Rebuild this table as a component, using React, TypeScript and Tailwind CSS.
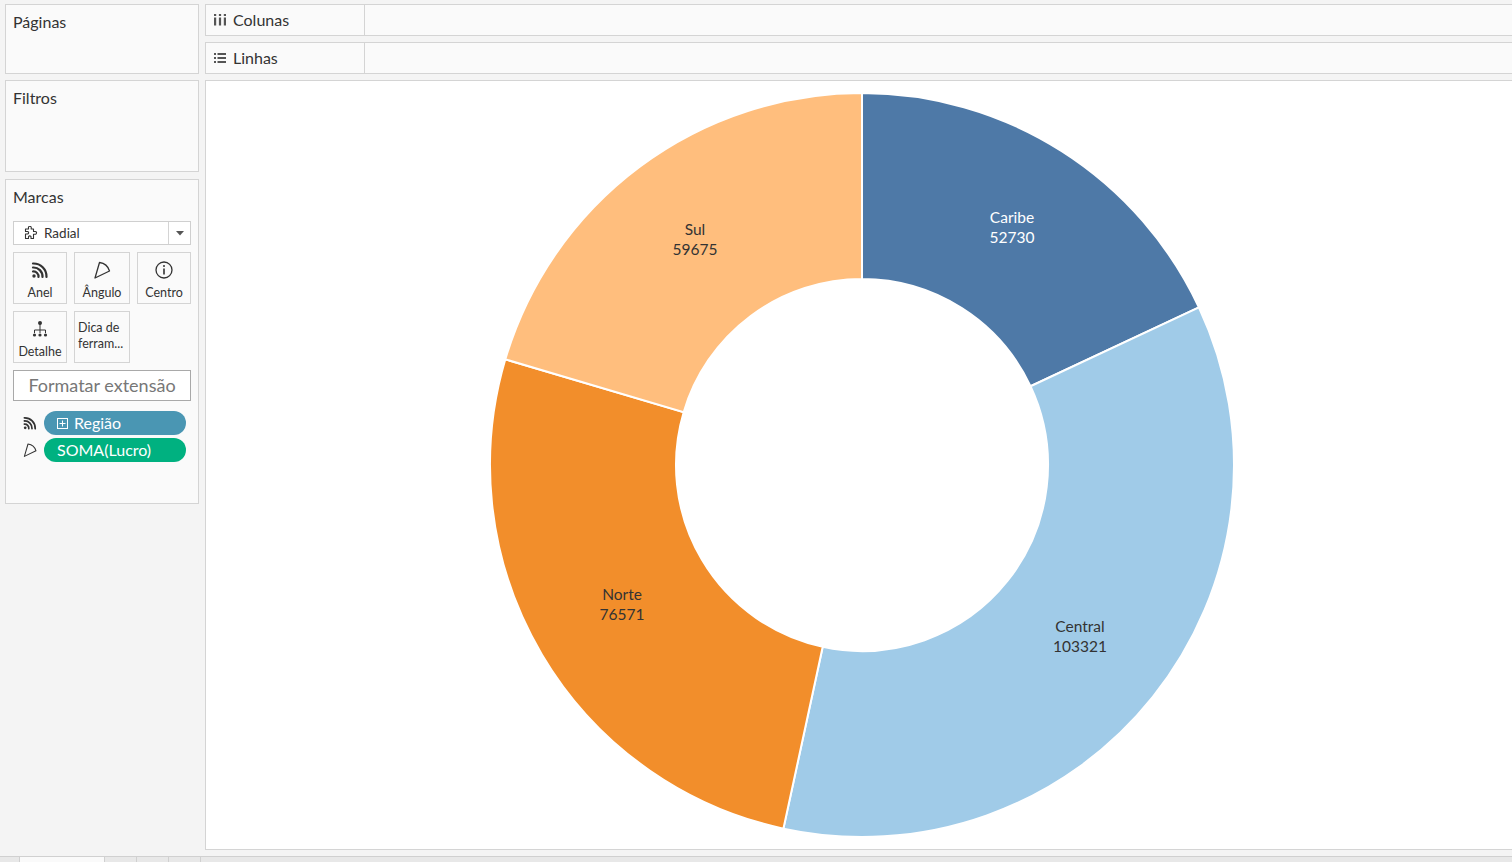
import React from "react";

const data = [
  { name: "Caribe", value: 52730, color: "#4e79a7", text: "#ffffff", lx: 806, ly: 142 },
  { name: "Central", value: 103321, color: "#a0cbe8", text: "#333333", lx: 874, ly: 551 },
  { name: "Norte", value: 76571, color: "#f28e2b", text: "#333333", lx: 416, ly: 519 },
  { name: "Sul", value: 59675, color: "#ffbe7d", text: "#333333", lx: 489, ly: 154 },
];

function pt(cx: number, cy: number, r: number, a: number) {
  const rad = (a * Math.PI) / 180;
  return [cx + r * Math.sin(rad), cy - r * Math.cos(rad)];
}

function arcPath(a0: number, a1: number, R: number, r: number, cx: number, cy: number) {
  const large = a1 - a0 > 180 ? 1 : 0;
  const [x0, y0] = pt(cx, cy, R, a0);
  const [x1, y1] = pt(cx, cy, R, a1);
  const [x2, y2] = pt(cx, cy, r, a1);
  const [x3, y3] = pt(cx, cy, r, a0);
  return `M${x0} ${y0} A${R} ${R} 0 ${large} 1 ${x1} ${y1} L${x2} ${y2} A${r} ${r} 0 ${large} 0 ${x3} ${y3} Z`;
}

function Donut() {
  const total = data.reduce((s, d) => s + d.value, 0);
  const cx = 656;
  const cy = 384;
  let acc = 0;
  return (
    <svg viewBox="0 0 1306 768" width="1306" height="768" className="block">
      {data.map((d) => {
        const a0 = (acc / total) * 360;
        acc += d.value;
        const a1 = (acc / total) * 360;
        return (
          <path key={d.name} d={arcPath(a0, a1, 372, 186, cx, cy)} fill={d.color} stroke="#ffffff" strokeWidth={2} />
        );
      })}
      {data.map((d) => (
        <text
          key={d.name + "t"}
          x={d.lx}
          y={d.ly}
          textAnchor="middle"
          fill={d.text}
          fontSize="15.5"
          fontFamily="Lato, 'Noto Sans', sans-serif"
        >
          <tspan x={d.lx} dy="0">{d.name}</tspan>
          <tspan x={d.lx} dy="20">{d.value}</tspan>
        </text>
      ))}
    </svg>
  );
}

function AnelIcon({ size = 20 }: { size?: number }) {
  return (
    <svg width={size} height={size} viewBox="0 0 20 20" fill="none" stroke="#333" strokeLinecap="round">
      <path d="M3 3.5 A13 13 0 0 1 16.5 17" strokeWidth="2.2" />
      <path d="M3 7.5 A9 9 0 0 1 12.5 17" strokeWidth="2.2" />
      <path d="M3 11.5 A5 5 0 0 1 8.5 17" strokeWidth="2.2" />
      <circle cx="4" cy="16" r="1.7" fill="#333" stroke="none" />
    </svg>
  );
}

function AnguloIcon({ size = 20 }: { size?: number }) {
  return (
    <svg width={size} height={size} viewBox="0 0 20 20" fill="none" stroke="#333" strokeWidth="1.3" strokeLinejoin="round">
      <path d="M3 18 L7.5 2.5 A12 12 0 0 1 17.5 11 Z" />
    </svg>
  );
}

function CentroIcon() {
  return (
    <svg width="20" height="20" viewBox="0 0 20 20" fill="none" stroke="#333" strokeWidth="1.3">
      <circle cx="10" cy="10" r="8" />
      <circle cx="10" cy="6" r="1" fill="#333" stroke="none" />
      <path d="M10 8.5 V14.5" strokeWidth="1.6" />
    </svg>
  );
}

function DetalheIcon() {
  return (
    <svg width="18" height="18" viewBox="0 0 18 18" fill="#333" stroke="#333" strokeWidth="1">
      <circle cx="9" cy="3" r="2" stroke="none" />
      <path d="M9 4 V10 M3.5 10 V13 M14.5 10 V13 M3.5 10 H14.5 M9 10 V13" fill="none" />
      <circle cx="3.5" cy="15" r="1.6" stroke="none" />
      <circle cx="9" cy="15" r="1.6" stroke="none" />
      <circle cx="14.5" cy="15" r="1.6" stroke="none" />
    </svg>
  );
}

function PuzzleIcon() {
  return (
    <svg width="14" height="14" viewBox="0 0 14 14" fill="none" stroke="#333" strokeWidth="1.1" strokeLinejoin="round">
      <path d="M1.5 12.5 V8 H3 A1.3 1.3 0 1 0 3 5.5 H1.5 V3 H4.5 V2 A1.4 1.4 0 1 1 7.2 2 V3 H9.5 V5.5 H10.8 A1.4 1.4 0 1 1 10.8 8.2 H9.5 V12.5 H7 V11.5 A1.3 1.3 0 1 0 4.5 11.5 V12.5 Z" />
    </svg>
  );
}

function ColunasIcon() {
  return (
    <svg width="14" height="14" viewBox="0 0 14 14" fill="#555">
      <rect x="1" y="1" width="2.2" height="2" />
      <rect x="1" y="4.5" width="2.2" height="8" />
      <rect x="5.9" y="1" width="2.2" height="2" />
      <rect x="5.9" y="4.5" width="2.2" height="8" />
      <rect x="10.8" y="1" width="2.2" height="2" />
      <rect x="10.8" y="4.5" width="2.2" height="8" />
    </svg>
  );
}

function LinhasIcon() {
  return (
    <svg width="14" height="14" viewBox="0 0 14 14" fill="#555">
      <rect x="1" y="2" width="2" height="2" />
      <rect x="4.5" y="2" width="8.5" height="2" />
      <rect x="1" y="6" width="2" height="2" />
      <rect x="4.5" y="6" width="8.5" height="2" />
      <rect x="1" y="10" width="2" height="2" />
      <rect x="4.5" y="10" width="8.5" height="2" />
    </svg>
  );
}

function PlusSquare() {
  return (
    <svg width="11" height="11" viewBox="0 0 11 11" fill="none" stroke="#fff" strokeWidth="1">
      <rect x="0.5" y="0.5" width="10" height="10" />
      <path d="M5.5 2.5 V8.5 M2.5 5.5 H8.5" />
    </svg>
  );
}

function MarkButton({ icon, label, w, twoLine }: { icon?: React.ReactNode; label: React.ReactNode; w: string; twoLine?: boolean }) {
  return (
    <div className={`${w} h-[52px] border border-[#d4d4d4] bg-[#fafafa] flex flex-col items-center`}>
      {twoLine ? (
        <div className="w-full pl-[3px] pt-[8px] text-[12.5px] leading-[16px] text-[#333] text-left">{label}</div>
      ) : (
        <>
          <div className="h-[20px] mt-[7px] flex items-center justify-center">{icon}</div>
          <div className="text-[12.5px] leading-[14px] text-[#333] mt-[6px]">{label}</div>
        </>
      )}
    </div>
  );
}

export default function App() {
  return (
    <div className="w-[1512px] h-[862px] bg-[#f4f4f4] flex flex-col overflow-hidden font-['Lato','Noto_Sans',sans-serif] text-[#333]">
      <div className="flex pt-[4px] pl-[5px] gap-[6px] h-[850px]">
        {/* Left column */}
        <div className="w-[194px] flex flex-col">
          <div className="h-[70px] border border-[#d4d4d4] bg-[#fafafa] px-[7px] pt-[7px] text-[16px] leading-[20px]">Páginas</div>
          <div className="h-[92px] mt-[6px] border border-[#d4d4d4] bg-[#fafafa] px-[7px] pt-[7px] text-[16px] leading-[20px]">Filtros</div>
          <div className="h-[325px] mt-[7px] border border-[#d4d4d4] bg-[#fafafa] px-[7px] pt-[7px]">
            <div className="text-[16px] leading-[20px]">Marcas</div>
            <div className="mt-[14px] h-[24px] w-[178px] border border-[#cfcfcf] bg-white flex items-center">
              <div className="flex-1 flex items-center pl-[10px] gap-[6px] text-[13.5px]">
                <PuzzleIcon />
                <span>Radial</span>
              </div>
              <div className="w-[22px] h-full border-l border-[#d4d4d4] flex items-center justify-center">
                <svg width="8" height="5" viewBox="0 0 8 5"><path d="M0 0 H8 L4 4.5 Z" fill="#555" /></svg>
              </div>
            </div>
            <div className="mt-[7px] flex gap-[7px]">
              <MarkButton w="w-[54px]" icon={<AnelIcon />} label="Anel" />
              <MarkButton w="w-[56px]" icon={<AnguloIcon />} label="Ângulo" />
              <MarkButton w="w-[54px]" icon={<CentroIcon />} label="Centro" />
            </div>
            <div className="mt-[7px] flex gap-[7px]">
              <MarkButton w="w-[54px]" icon={<DetalheIcon />} label="Detalhe" />
              <MarkButton w="w-[56px]" twoLine label={<>Dica de<br />ferram...</>} />
            </div>
            <div className="mt-[7px] w-[178px] h-[31px] border border-[#a9a9a9] bg-white flex items-center justify-center text-[18px] text-[#777]">
              Formatar extensão
            </div>
            <div className="mt-[10px] flex items-center">
              <div className="w-[31px] pl-[9px]"><AnelIcon size={16} /></div>
              <div className="w-[142px] h-[24px] rounded-full bg-[#4a96b3] text-white text-[16px] flex items-center pl-[13px] gap-[6px]">
                <PlusSquare />
                <span>Região</span>
              </div>
            </div>
            <div className="mt-[3px] flex items-center">
              <div className="w-[31px] pl-[9px]"><AnguloIcon size={16} /></div>
              <div className="w-[142px] h-[24px] rounded-full bg-[#00b180] text-white text-[16px] flex items-center pl-[13px]">
                SOMA(Lucro)
              </div>
            </div>
          </div>
        </div>

        {/* Right column */}
        <div className="flex-1 flex flex-col">
          <div className="h-[32px] border-y border-l border-[#d4d4d4] bg-[#fafafa] flex">
            <div className="w-[159px] border-r border-[#d4d4d4] flex items-center pl-[7px] gap-[6px] text-[16px]">
              <ColunasIcon />
              <span>Colunas</span>
            </div>
          </div>
          <div className="h-[32px] mt-[6px] border-y border-l border-[#d4d4d4] bg-[#fafafa] flex">
            <div className="w-[159px] border-r border-[#d4d4d4] flex items-center pl-[7px] gap-[6px] text-[16px]">
              <LinhasIcon />
              <span>Linhas</span>
            </div>
          </div>
          <div className="h-[770px] mt-[6px] border-y border-l border-[#d4d4d4] bg-white overflow-hidden">
            <Donut />
          </div>
        </div>
      </div>

      {/* Bottom tabs */}
      <div className="mt-[6px] h-[6px] border-t border-[#d0d0d0] bg-[#e8e8e8] flex">
        <div className="w-[19px]" />
        <div className="w-[86px] bg-[#fafafa] border-x border-[#d0d0d0]" />
        <div className="w-[32px] border-r border-[#d0d0d0]" />
        <div className="w-[32px] border-r border-[#d0d0d0]" />
        <div className="w-[32px] border-r border-[#d0d0d0]" />
      </div>
    </div>
  );
}
